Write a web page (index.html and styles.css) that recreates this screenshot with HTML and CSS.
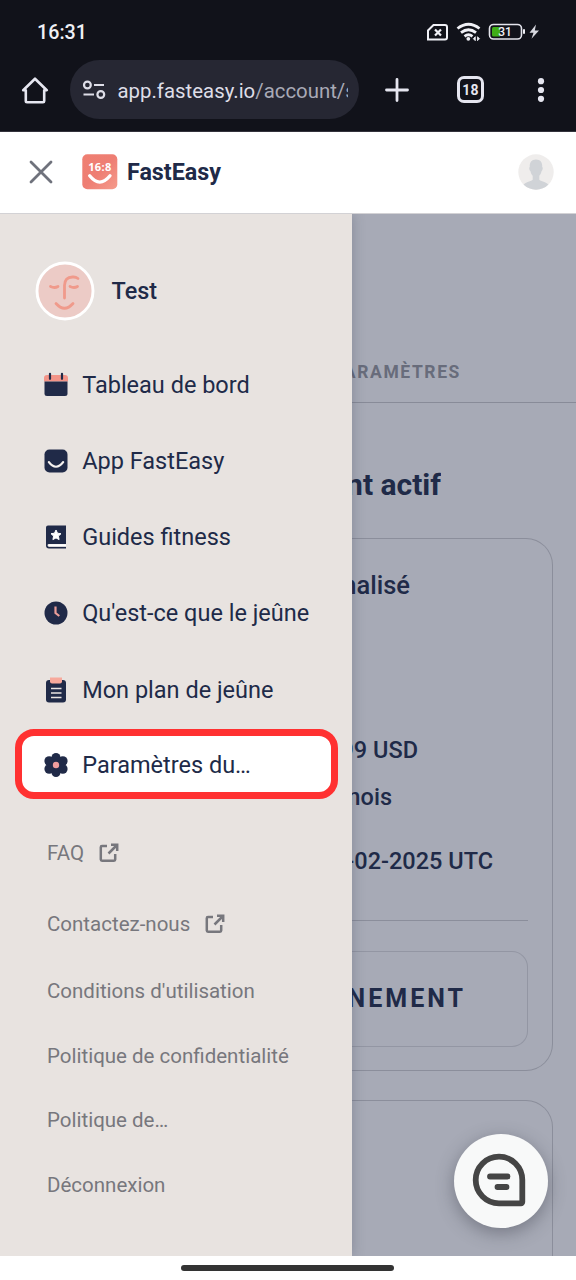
FILE: index.html
```html
<!DOCTYPE html>
<html lang="fr">
<head>
<meta charset="utf-8">
<title>FastEasy</title>
<link rel="stylesheet" href="styles.css">
</head>
<body>
<div class="phone">
  <div class="status">
    <span class="clock">16:31</span>
    <svg class="status-icons" width="116" height="24" viewBox="426 20 116 24" fill="none">
      <path d="M433.500 25H445a2 2 0 0 1 2 2v10.500a2 2 0 0 1-2 2H428V30.500z" stroke="#f0f0f6" stroke-width="2"/>
      <path d="M435 29.500l6 6m0-6l-6 6" stroke="#f0f0f6" stroke-width="2.200"/>
      <path d="M457.500 28.500q11-8.500 22 0M461 32.700q7.500-6 15 0M464.500 36.300q4-3 8 0" stroke="#f0f0f6" stroke-width="2.800"/>
      <circle cx="468.300" cy="38.800" r="1.900" fill="#f0f0f6"/>
      <path d="M475.300 36.700v4l-2-2zM477.500 36.700v4l2-2z" fill="#f0f0f6" stroke="#f0f0f6" stroke-width=".8"/>
      <rect x="489.500" y="24.500" width="32" height="14.500" rx="4" stroke="#e4e4ec" stroke-width="1.600"/>
      <path d="M492 28.500q0-1.500 1.500-1.500h6.500v9.500h-6.500q-1.500 0-1.500-1.500z" fill="#3fae17"/>
      <text x="505" y="36.300" class="battery-text">31</text>
      <rect x="523" y="29" width="2" height="5" rx="1" fill="#f0f0f6"/>
      <path d="M536 24.500l-6.500 8.300h4l-2 6 7.500-8.300h-4.200z" fill="#d8d8e0"/>
    </svg>
  </div>
  <div class="toolbar">
    <svg class="home" width="28" height="28" viewBox="0 0 28 28" fill="none" stroke="#e6e6f0" stroke-width="2.600" stroke-linejoin="round" stroke-linecap="round"><path d="M2.200 14.200L14 2.700l11.800 11.500H23.200V25a1.200 1.200 0 0 1-1.200 1.200H6A1.200 1.200 0 0 1 4.800 25V14.200z"/></svg>
    <div class="url-pill">
      <svg width="24" height="20" viewBox="0 0 24 20" fill="none" stroke="#dedee8" stroke-width="2.200"><circle cx="5.400" cy="5" r="3.400"/><path d="M12 5h10M1.500 14.500h10.500"/><circle cx="18.800" cy="14.500" r="3.400"/></svg>
      <div class="url">app.fasteasy.io<span class="path">/account/s</span></div>
    </div>
    <svg class="plus" width="24" height="24" viewBox="0 0 24 24" stroke="#e6e6f0" stroke-width="2.800" stroke-linecap="round"><path d="M12 1.500v21M1.500 12h21"/></svg>
    <div class="tabs">18</div>
    <svg class="dots" width="8" height="24" viewBox="0 0 8 24" fill="#e6e6f0"><circle cx="4" cy="3.200" r="3.100"/><circle cx="4" cy="12" r="3.100"/><circle cx="4" cy="20.800" r="3.100"/></svg>
  </div>
  <div class="header">
    <svg class="close" width="24" height="24" viewBox="0 0 24 24" stroke="#6f727c" stroke-width="2.800" stroke-linecap="round"><path d="M2 2l20 20M22 2L2 22"/></svg>
    <svg class="logo" width="36" height="36" viewBox="0 0 36 36">
      <defs><linearGradient id="coral" x1="0" y1="0" x2="1" y2="1"><stop offset="0" stop-color="#ef7f72"/><stop offset=".5" stop-color="#ee7e73"/><stop offset="1" stop-color="#f59b8c"/></linearGradient></defs>
      <rect x=".3" y=".3" width="35" height="35" rx="5" fill="url(#coral)"/>
      <text x="17.900" y="17.300" class="logo-text">16:8</text>
      <path d="M7.700 21.800q10 12.500 20.300 0" fill="none" stroke="#fff" stroke-width="3.300" stroke-linecap="round"/>
    </svg>
    <span class="brand">FastEasy</span>
    <svg class="user" width="36" height="36" viewBox="0 0 36 36">
      <defs><clipPath id="disc"><circle cx="18" cy="18" r="17.700"/></clipPath></defs>
      <circle cx="18" cy="18" r="17.700" fill="#efedec"/>
      <path clip-path="url(#disc)" d="M18 5.500c4.600 0 6.500 3 6.200 7.500 1 .2.500 3.500-.7 4.200-.4 2.300-1.300 3.700-2.200 4.600v4c2.200 2.100 8.200 2.200 9.700 6V36H5v-4.200c1.500-3.800 7.500-3.900 9.700-6v-4c-.9-.9-1.800-2.300-2.200-4.600-1.200-.7-1.700-4-.7-4.200-.3-4.500 1.600-7.500 6.200-7.500z" fill="#d0d3d7"/>
    </svg>
  </div>
  <div class="main">
    <nav class="drawer">
      <div class="profile">
        <svg width="60" height="60" viewBox="0 0 60 60" fill="none" stroke="#f09a8b" stroke-width="2.800" stroke-linecap="round">
          <circle cx="30" cy="30" r="28" fill="#eccbc6" stroke="#fff" stroke-width="2.900"/>
          <path d="M29.500 37V24.500q0-8.500 8-8.500h1q2.500 0 4.500 1.500M15.500 25.500q4 2 7.500 0M35 25.500q4 2 7.500 0M21 42.500q8.500 9.500 17 0"/>
        </svg>
        <span>Test</span>
      </div>
      <a class="item"><svg width="24" height="26" viewBox="0 0 24 26"><path d="M0 9.500V6q0-3 3-3h18q3 0 3 3v3.500z" fill="#f39488"/><path d="M.5 9.500h23v12q0 2.500-2.500 2.500H3Q.5 24 .5 21.500z" fill="#202a48"/><path d="M6 1.800v5M18 1.800v5" stroke="#202a48" stroke-width="2.200" stroke-linecap="round"/></svg>Tableau de bord</a>
      <a class="item"><svg width="24" height="26" viewBox="0 0 24 26"><rect x=".5" y="1.500" width="23" height="23" rx="5" fill="#202a48"/><path d="M4.800 14q7.200 9.500 14.400 0" fill="none" stroke="#f5f1ef" stroke-width="2.100" stroke-linecap="round"/></svg>App FastEasy</a>
      <a class="item"><svg width="24" height="26" viewBox="0 0 24 26"><path d="M4 1.500h18V20H5q-1.500 0-1.500 1.200T5 22.700h17V24.500H5q-3 0-3-3v-18q0-2 2-2z" fill="#202a48"/><path d="M4.500 20.300H22v2.200H4.500z" fill="#fff"/><path d="M12 6l1.500 3.200 3.500.5-2.600 2.400.7 3.500-3.100-1.700-3.100 1.700.7-3.500L7 9.700l3.500-.5z" fill="#fff" stroke="#fff" stroke-linejoin="round"/></svg>Guides fitness</a>
      <a class="item"><svg width="24" height="26" viewBox="0 0 24 26"><circle cx="12" cy="13" r="11.500" fill="#202a48"/><path d="M11.500 6.500v6.500l3.800 3" fill="none" stroke="#eb9e99" stroke-width="2.200"/></svg>Qu'est-ce que le jeûne</a>
      <a class="item"><svg width="24" height="26" viewBox="0 0 24 26"><rect x="2" y="3" width="20" height="22.500" rx="3" fill="#202a48"/><path d="M6 .5h12v4q0 2-2 2H8q-2 0-2-2z" fill="#f7a99c"/><path d="M7 11.500h10.500M7 16h10.500M7 20.500h10.500" stroke="#e9e4e1" stroke-width="1.700"/></svg>Mon plan de jeûne</a>
      <a class="item selected"><svg width="24" height="26" viewBox="0 0 24 26"><g fill="#202a48"><circle cx="12" cy="13" r="8"/><circle cx="12" cy="5.500" r="4.500"/><circle cx="12" cy="20.500" r="4.500"/><circle cx="5.200" cy="9" r="4.800"/><circle cx="18.800" cy="9" r="4.800"/><circle cx="5.200" cy="17" r="4.800"/><circle cx="18.800" cy="17" r="4.800"/></g><circle cx="12" cy="13" r="3.200" fill="#ef9d9e"/></svg>Paramètres du…</a>
      <div class="links">
        <a class="link external">FAQ <svg width="20" height="20" viewBox="0 0 20 20" fill="none" stroke="#77777d" stroke-width="2.500"><path d="M8 3H3q-1.200 0-1.200 1.200V16.500q0 1.200 1.200 1.200h12q1.200 0 1.200-1.200v-5.500M12 1.700h6.200v6.200M18 2L9.500 10.500"/></svg></a>
        <a class="link external">Contactez-nous <svg width="20" height="20" viewBox="0 0 20 20" fill="none" stroke="#77777d" stroke-width="2.500"><path d="M8 3H3q-1.200 0-1.200 1.200V16.500q0 1.200 1.200 1.200h12q1.200 0 1.200-1.200v-5.500M12 1.700h6.200v6.200M18 2L9.500 10.500"/></svg></a>
        <a class="link">Conditions d'utilisation</a>
        <a class="link">Politique de confidentialité</a>
        <a class="link">Politique de…</a>
        <a class="link">Déconnexion</a>
      </div>
    </nav>
    <section class="page">
      <div class="tab"><span class="cut tab-label">PARAMÈTRES</span></div>
      <h1 class="cut title">nt actif</h1>
      <div class="card">
        <div class="cut plan">nalisé</div>
        <div class="cut price">99 USD</div>
        <div class="cut period">mois</div>
        <div class="cut date">-02-2025 UTC</div>
        <div class="rule"></div>
        <div class="button"><span class="cut button-label">NEMENT</span></div>
      </div>
      <div class="card next"></div>
    </section>
    <div class="chat"><svg width="54" height="54" viewBox="0 0 54 54" fill="none" stroke="#454545" stroke-width="5.800" stroke-linecap="round" stroke-linejoin="round"><path d="M27 3.700A23.300 23.300 0 0 0 27 50.300H49a1.300 1.300 0 0 0 1.300-1.300V27A23.300 23.300 0 0 0 27 3.700zM18 23.500h17.500M25.500 34h9"/></svg></div>
  </div>
  <div class="gesture"><span></span></div>
</div>
</body>
</html>
```
FILE: styles.css
```css
* { box-sizing: border-box; }
body { margin: 0; font-family: Roboto, "Liberation Sans", sans-serif; color: #202a48; }
.phone { width: 576px; height: 1280px; overflow: hidden; display: flex; flex-direction: column; background: #fff; }

.status { height: 60px; background: #11121a; display: flex; justify-content: space-between; padding: 20px 34px 0 37px; color: #f0f0f6; }
.clock { font-size: 19.700px; line-height: 25px; font-weight: 500; }
.battery-text { font: 500 12px Roboto, sans-serif; fill: #f0f0f6; text-anchor: middle; }

.toolbar { height: 72px; background: #11121a; display: flex; align-items: flex-start; padding-left: 21px; border-bottom: 1px solid #33333c; }
.home { margin-top: 16px; }
.url-pill { width: 289px; height: 59px; margin-left: 21px; border-radius: 30px; background: #262733; display: flex; align-items: center; padding: 0 10px 0 12px; }
.url { margin-left: 11.500px; width: 230px; overflow: hidden; white-space: nowrap; font-size: 20.400px; line-height: 30px; color: #dedee8; padding-top: 2px; }
.path { color: #a9aab6; }
.plus { margin: 18px 0 0 26px; }
.tabs { width: 27px; height: 27px; margin: 16px 0 0 48px; border: 3px solid #e6e6f0; border-radius: 7px; color: #e6e6f0; font-size: 14px; font-weight: 700; line-height: 22px; text-align: center; letter-spacing: .3px; }
.dots { margin: 18px 0 0 53px; }

.header { height: 82px; display: flex; align-items: center; padding: 0 22px 2px 29px; border-bottom: 1px solid #d3d2d5; }
.logo { margin-left: 29px; }
.logo-text { font: 700 11px "Open Sans", sans-serif; fill: #fff; text-anchor: middle; letter-spacing: .3px; }
.brand { margin-left: 9px; font-size: 23.300px; font-weight: 700; line-height: 30px; }
.user { margin-left: auto; }

.main { height: 1042px; display: flex; position: relative; background: #a7aab6; }
.drawer { width: 352px; background: #e8e3e0; padding: 47px 14px 0 15px; position: relative; box-shadow: 0 0 12px rgba(50, 55, 80, .3); clip-path: inset(0 -20px 0 0); }
.profile { display: flex; align-items: center; height: 59px; padding-left: 19.500px; margin-bottom: 26.400px; font-size: 23.400px; font-weight: 500; }
.profile span { margin-left: 17px; }
.item { display: flex; align-items: center; height: 76.300px; padding-left: 29px; font-size: 23.500px; white-space: nowrap; }
.item svg { margin-right: 14.200px; }
.selected { height: 70px; margin-top: 1.600px; padding: 2px 0 0 22px; background: #fff; border: 7.500px solid #ff3131; border-radius: 19px; }
.links { padding: 18.500px 0 0 32px; }
.link { display: flex; align-items: center; height: 64.500px; font-size: 20.500px; color: #77777d; white-space: nowrap; }
.external { height: 70.500px; }
.external svg { margin-left: 14.500px; }

.page { width: 224px; overflow: hidden; }
.cut { display: flex; justify-content: flex-end; overflow: hidden; white-space: nowrap; margin: 0; }
.tab { height: 189px; padding-top: 146px; border-bottom: 1px solid #888b98; }
.tab-label { width: 109px; font-size: 17.500px; line-height: 24px; font-weight: 700; letter-spacing: 1.600px; color: #686c7b; }
.title { width: 89px; margin-top: 62px; font-size: 30px; line-height: 40px; font-weight: 700; }
.card { width: 201px; height: 533px; margin-top: 33px; padding-right: 24px; border: solid #8b8e9b; border-width: 1px 1px 1px 0; border-radius: 0 27px 27px 0; }
.plan { width: 58px; padding-top: 30px; font-size: 25.500px; line-height: 32px; font-weight: 500; }
.price { width: 66px; margin-top: 134px; font-size: 23.500px; line-height: 30px; font-weight: 500; }
.period { width: 40px; margin-top: 17px; font-size: 23.500px; line-height: 30px; font-weight: 500; }
.date { width: 141px; margin-top: 34px; font-size: 23.500px; line-height: 30px; font-weight: 500; }
.rule { height: 1px; margin-top: 44px; background: #8b8e9b; }
.button { height: 96px; margin-top: 29.500px; padding-top: 31px; border: solid #9396a3; border-width: 1px 1px 1px 0; border-radius: 0 16px 16px 0; }
.button-label { width: 114px; font-size: 25px; line-height: 32px; font-weight: 700; letter-spacing: 3px; }
.next { margin-top: 29px; height: 200px; }
.chat { position: absolute; left: 454px; top: 920px; width: 94px; height: 94px; border-radius: 50%; background: #f8f9f9; display: flex; align-items: center; justify-content: center; padding: 0 4px 2px 0; box-shadow: 0 5px 18px rgba(50, 52, 65, .42); }

.gesture { height: 24px; background: #fff; display: flex; justify-content: center; padding: 9px 1px 0 0; }
.gesture span { width: 213px; height: 6px; border-radius: 3px; background: #333; }
```
